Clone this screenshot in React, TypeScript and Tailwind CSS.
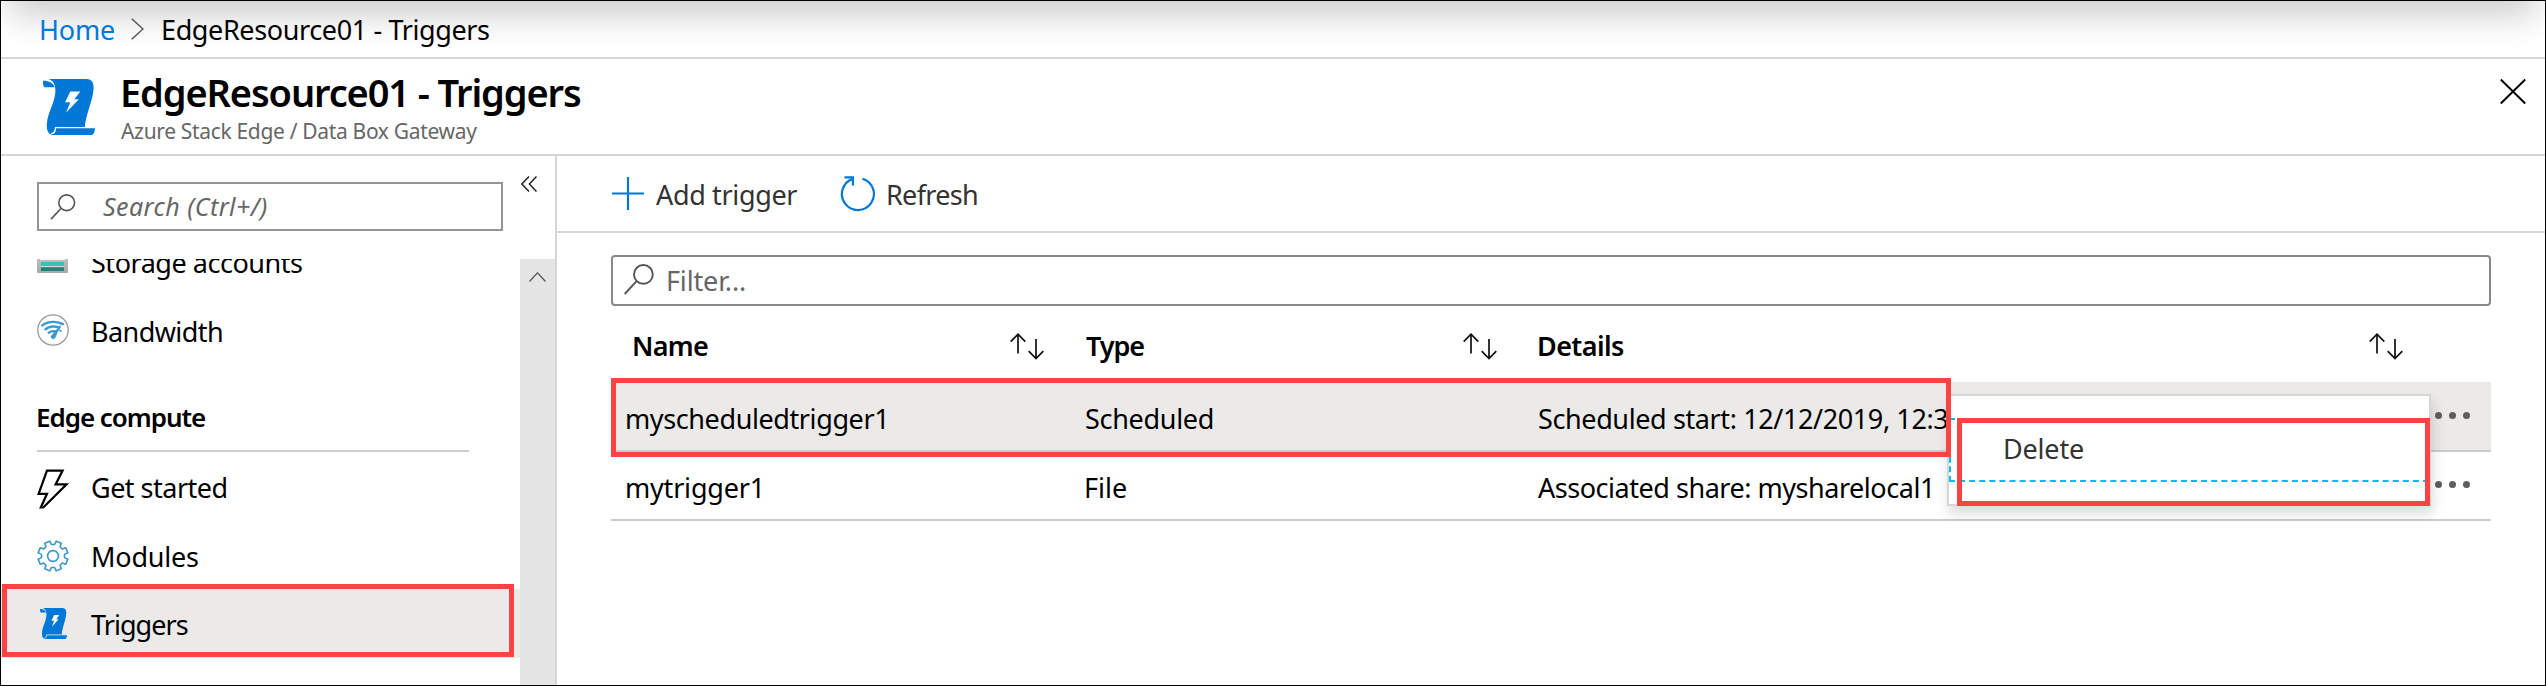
import type { ReactNode } from "react";

function ScrollIcon({ className }: { className: string }) {
  return (
    <svg className={className} viewBox="0 0 52 56" preserveAspectRatio="none">
      <path d="M0 1.8C6 1.6 10.5 4 11.5 8.3L1.2 8.3Q-.4 5 0 1.8Z" fill="#0078d7" />
      <path
        d="M5.5 0H43.5C49 .3 51 4 50.6 9.5C50 22 43 34 41.8 48.2H51.8C52 53 51 56 47.5 56H9.5C5 55 3.6 51 3.8 45.5C4.3 34 11.8 24 12.4 12.5C12.6 6 10.5 1.5 5.5 0Z"
        fill="#0078d7"
      />
      <path d="M51.5 48.6H12.6C12.4 52 11.4 54.6 8.2 54.6" fill="none" stroke="#fff" strokeWidth="1.3" />
      <path d="M27.3 12.5H37.3L31.3 20.3H35.8L23 33.7L27.3 23.2H22Z" fill="#fff" />
    </svg>
  );
}

function SearchIcon({ className }: { className: string }) {
  return (
    <svg className={className} viewBox="0 0 30 31" fill="none" stroke="#555" strokeWidth="1.9">
      <circle cx="19.4" cy="10.4" r="9.4" />
      <path d="M12.6 17.2L.7 30" />
    </svg>
  );
}

function SortIcon() {
  return (
    <svg className="h-[27px] w-[34px]" viewBox="0 0 34 27" fill="none" stroke="#111" strokeWidth="1.7">
      <path d="M8 20.5V1.2M.7 8.7L8 1.2L15.3 8.7" />
      <path d="M26 6V25.6M18.7 18.2L26 25.6L33.3 18.2" />
    </svg>
  );
}

function StorageIcon() {
  return (
    <svg className="h-[28px] w-[31px]" viewBox="0 0 31 28">
      <defs>
        <linearGradient id="shelf" x1="0" y1="0" x2="0" y2="1">
          <stop offset="0" stopColor="#d8d8d8" />
          <stop offset="1" stopColor="#a8a8a8" />
        </linearGradient>
      </defs>
      <rect width="31" height="28" rx="1" fill="url(#shelf)" />
      <rect x="3" y="3" width="25" height="12" fill="#fff" />
      <rect x="4" y="17" width="23" height="4.2" fill="#37c2b1" />
      <rect x="4" y="21.2" width="23" height="1" fill="#e6e6e6" />
      <rect x="4" y="22.2" width="23" height="3.8" fill="#258277" />
    </svg>
  );
}

function BandwidthIcon() {
  return (
    <svg className="h-[32px] w-[32px]" viewBox="0 0 32 32" fill="none">
      <circle cx="16" cy="16" r="15.2" fill="#fff" stroke="#999" strokeWidth="1.3" />
      <g stroke="#3999d2" strokeWidth="2.4">
        <path d="M4.5 12C10 7 20 6.5 27 10.5" />
        <path d="M7.8 15.8C11.5 12 18 11.5 23.5 14" />
        <path d="M11 19.3C13 17.2 16 16.8 19 17.5" />
      </g>
      <path d="M24.6 9.4L18.2 24A2.4 2.4 0 0 1 13.9 22Z" fill="#3999d2" />
      <path d="M22 16L24.5 17.2" stroke="#3999d2" strokeWidth="1.6" />
    </svg>
  );
}

function BoltIcon() {
  return (
    <svg className="h-[40px] w-[32px]" viewBox="0 0 32 40" fill="none" stroke="#000" strokeWidth="2.2">
      <path d="M10 1.6H25.6L18.6 15.4H29.6L6.3 38.5H3.8L10 24.8H1.6Z" />
    </svg>
  );
}

const gearPath =
  Array.from({ length: 8 }, (_, i) => 22.5 + i * 45)
    .flatMap((a) => [
      [a - 14.5, 11.6],
      [a - 10.5, 15.2],
      [a + 10.5, 15.2],
      [a + 14.5, 11.6],
    ])
    .map(([a, r], i) => {
      const t = (a * Math.PI) / 180;
      return `${i ? "L" : "M"}${(16 + r * Math.sin(t)).toFixed(2)} ${(16 - r * Math.cos(t)).toFixed(2)}`;
    })
    .join("") + "Z";

function GearIcon() {
  return (
    <svg
      className="h-[32px] w-[32px]"
      viewBox="0 0 32 32"
      fill="none"
      stroke="#3999c6"
      strokeWidth="1.6"
      strokeLinejoin="round"
    >
      <path d={gearPath} />
      <circle cx="16" cy="16" r="5.4" />
    </svg>
  );
}

function NavItem({ icon, label, className = "" }: { icon: ReactNode; label: string; className?: string }) {
  return (
    <div className={`flex h-[69px] shrink-0 items-center pl-[36px] ${className}`}>
      <div className="flex w-[54px] shrink-0">{icon}</div>
      <span className="pt-[2px]">{label}</span>
    </div>
  );
}

function Dots() {
  return (
    <div className="flex gap-[7px] pb-[2px] pl-[6px]">
      <i className="size-[7px] rounded-full bg-[#605e5c]" />
      <i className="size-[7px] rounded-full bg-[#605e5c]" />
      <i className="size-[7px] rounded-full bg-[#605e5c]" />
    </div>
  );
}

export default function App() {
  return (
    <div className="relative flex h-[686px] w-full flex-col overflow-hidden border border-black bg-white font-['Noto_Sans',sans-serif] text-[27px] leading-[36px] whitespace-nowrap text-black">
      <div className="absolute inset-x-[8px] -top-[60px] h-[60px] shadow-[0_14px_34px_rgba(0,0,0,0.2)]" />

      <nav className="relative flex h-[58px] shrink-0 items-center border-b-2 border-[#d6d6d6] pl-[38px]">
        <span className="w-[92px] pt-[2px] tracking-[-0.2px] text-[#0078d7]">Home</span>
        <svg className="h-[22px] w-[13px]" viewBox="0 0 13 22" fill="none" stroke="#555" strokeWidth="1.5">
          <path d="M.7 .7L12 11L.7 21.3" />
        </svg>
        <span className="pt-[2px] pl-[17px] tracking-[-0.38px]">EdgeResource01 - Triggers</span>
      </nav>

      <header className="relative flex h-[97px] shrink-0 border-b-2 border-[#d6d6d6] pl-[42px]">
        <ScrollIcon className="mt-[20px] h-[56px] w-[52px]" />
        <div className="grow pt-[9px] pl-[25px]">
          <h1 className="text-[38px] leading-[48px] font-semibold tracking-[-1.12px]">EdgeResource01 - Triggers</h1>
          <p className="pt-[1px] pl-[1px] text-[21px] leading-[29px] tracking-[-0.33px] text-[#666]">
            Azure Stack Edge / Data Box Gateway
          </p>
        </div>
        <svg
          className="mt-[20px] mr-[19px] h-[25px] w-[26px]"
          viewBox="0 0 26 25"
          fill="none"
          stroke="#000"
          strokeWidth="2"
        >
          <path d="M.8 .5L25.2 24.5M25.2 .5L.8 24.5" />
        </svg>
      </header>

      <div className="flex min-h-0 grow">
        <aside className="flex w-[556px] shrink-0 flex-col border-r-2 border-[#d6d6d6]">
          <div className="flex h-[103px] shrink-0 pl-[36px]">
            <div className="mt-[26px] flex h-[49px] w-[466px] items-center border-2 border-[#949494] pl-[11px]">
              <SearchIcon className="h-[26px] w-[26px]" />
              <span className="pb-[2px] pl-[27px] text-[25px] tracking-[0.44px] text-[#666] italic">
                Search (Ctrl+/)
              </span>
            </div>
            <svg
              className="mt-[20px] ml-[18px] h-[16px] w-[16px]"
              viewBox="0 0 16 16"
              fill="none"
              stroke="#222"
              strokeWidth="1.5"
            >
              <path d="M8 .5L.9 8L8 15.5M15.5 .5L8.4 8L15.5 15.5" />
            </svg>
          </div>
          <div className="flex min-h-0 grow">
            <div className="flex w-[519px] flex-col overflow-hidden">
              <NavItem
                className="-mt-[32px] tracking-[-0.47px]"
                label="Storage accounts"
                icon={
                  <div className="-mt-[5px]">
                    <StorageIcon />
                  </div>
                }
              />
              <NavItem
                className="tracking-[-0.57px]"
                label="Bandwidth"
                icon={
                  <div className="-mt-[2px]">
                    <BandwidthIcon />
                  </div>
                }
              />
              <div className="mr-[51px] ml-[36px] flex h-[87px] shrink-0 items-end border-b-2 border-[#ccc] pb-[15px] text-[26px] font-semibold tracking-[-1.05px]">
                <span className="-ml-[1px]">Edge compute</span>
              </div>
              <NavItem
                className="-mt-[1px] pt-[3px] tracking-[-0.51px]"
                label="Get started"
                icon={
                  <div className="mt-[4px]">
                    <BoltIcon />
                  </div>
                }
              />
              <NavItem className="pt-[2px] tracking-[-0.22px]" label="Modules" icon={<GearIcon />} />
              <NavItem
                className="bg-[#ebeae9] tracking-[-0.95px]"
                label="Triggers"
                icon={<ScrollIcon className="ml-[3px] h-[31px] w-[27px]" />}
              />
            </div>
            <div className="flex w-[35px] justify-center bg-[#e5e5e5] pt-[13px]">
              <svg className="h-[10px] w-[17px]" viewBox="0 0 17 10" fill="none" stroke="#555" strokeWidth="1.2">
                <path d="M.5 9.5L8.5 .8L16.5 9.5" />
              </svg>
            </div>
          </div>
        </aside>

        <main className="flex grow flex-col">
          <div className="flex h-[77px] shrink-0 items-center border-b-2 border-[#d6d6d6] pl-[55px] text-[#333]">
            <svg className="h-[33px] w-[32px]" viewBox="0 0 32 33" stroke="#0078d7" strokeWidth="2.2">
              <path d="M16 0V33M0 16.5H32" />
            </svg>
            <span className="w-[196px] pt-[2px] pl-[12px] tracking-[-0.35px]">Add trigger</span>
            <svg className="h-[36px] w-[36px]" viewBox="0 0 36 36" fill="none" stroke="#0078d7" strokeWidth="2.2">
              <path d="M22.4 2.7A16 16 0 1 1 12.8 2.9" />
              <path d="M4.5 1.4H12.9V9.4" />
            </svg>
            <span className="pt-[2px] pl-[10px] tracking-[-0.68px]">Refresh</span>
          </div>

          <div className="mt-[22px] mr-[54px] ml-[54px] flex h-[51px] shrink-0 items-center rounded-[4px] border-2 border-[#888] pl-[11px]">
            <SearchIcon className="mb-[3px] h-[31px] w-[30px]" />
            <span className="pt-[1px] pl-[12px] tracking-[-0.15px] text-[#666]">Filter...</span>
          </div>

          <div className="mr-[54px] ml-[54px]">
            <div className="grid h-[76px] grid-cols-[460px_453px_905px_1fr] items-center pt-[4px] font-semibold">
              <div className="flex items-center justify-between pr-[27px] pl-[21px]">
                <span className="tracking-[-0.71px]">Name</span>
                <SortIcon />
              </div>
              <div className="flex items-center justify-between pr-[27px] pl-[15px]">
                <span className="tracking-[-1.1px]">Type</span>
                <SortIcon />
              </div>
              <div className="flex items-center justify-between pr-[26px] pl-[13px]">
                <span className="tracking-[-0.6px]">Details</span>
                <SortIcon />
              </div>
            </div>
            <div className="grid h-[70px] grid-cols-[460px_453px_905px_1fr] items-center border-b-2 border-[#ccc] bg-[#ebeae9]">
              <span className="pt-[5px] pl-[14px] tracking-[-0.4px]">myscheduledtrigger1</span>
              <span className="pt-[5px] pl-[14px] tracking-[-0.3px]">Scheduled</span>
              <span className="pt-[5px] pl-[14px] tracking-[-0.39px]">Scheduled start: 12/12/2019, 12:3</span>
              <Dots />
            </div>
            <div className="grid h-[69px] grid-cols-[460px_453px_905px_1fr] items-center border-b-2 border-[#ccc]">
              <span className="pt-[5px] pl-[14px] tracking-[-0.2px]">mytrigger1</span>
              <span className="pt-[5px] pl-[13px]">File</span>
              <span className="pt-[5px] pl-[14px] tracking-[-0.47px]">Associated share: mysharelocal1</span>
              <Dots />
            </div>
          </div>
        </main>
      </div>

      <div className="absolute top-[393px] left-[1946px] h-[112px] w-[484px] border-2 border-[#d6d6d6] bg-white pt-[22px] shadow-[2px_8px_12px_rgba(0,0,0,0.14)]">
        <div className="flex h-[64px] items-center border-2 border-dashed border-[#00bcf2] pb-[2px] pl-[52px] tracking-[-0.18px] text-[#333]">
          Delete
        </div>
      </div>
      <div className="absolute top-[417px] left-[1956px] h-[88px] w-[473px] border-5 border-[#ff4343]" />
      <div className="absolute top-[377px] left-[610px] h-[79px] w-[1340px] border-5 border-[#ff4343]" />
      <div className="absolute top-[583px] left-[1px] h-[73px] w-[512px] border-5 border-[#ff4343]" />
    </div>
  );
}
